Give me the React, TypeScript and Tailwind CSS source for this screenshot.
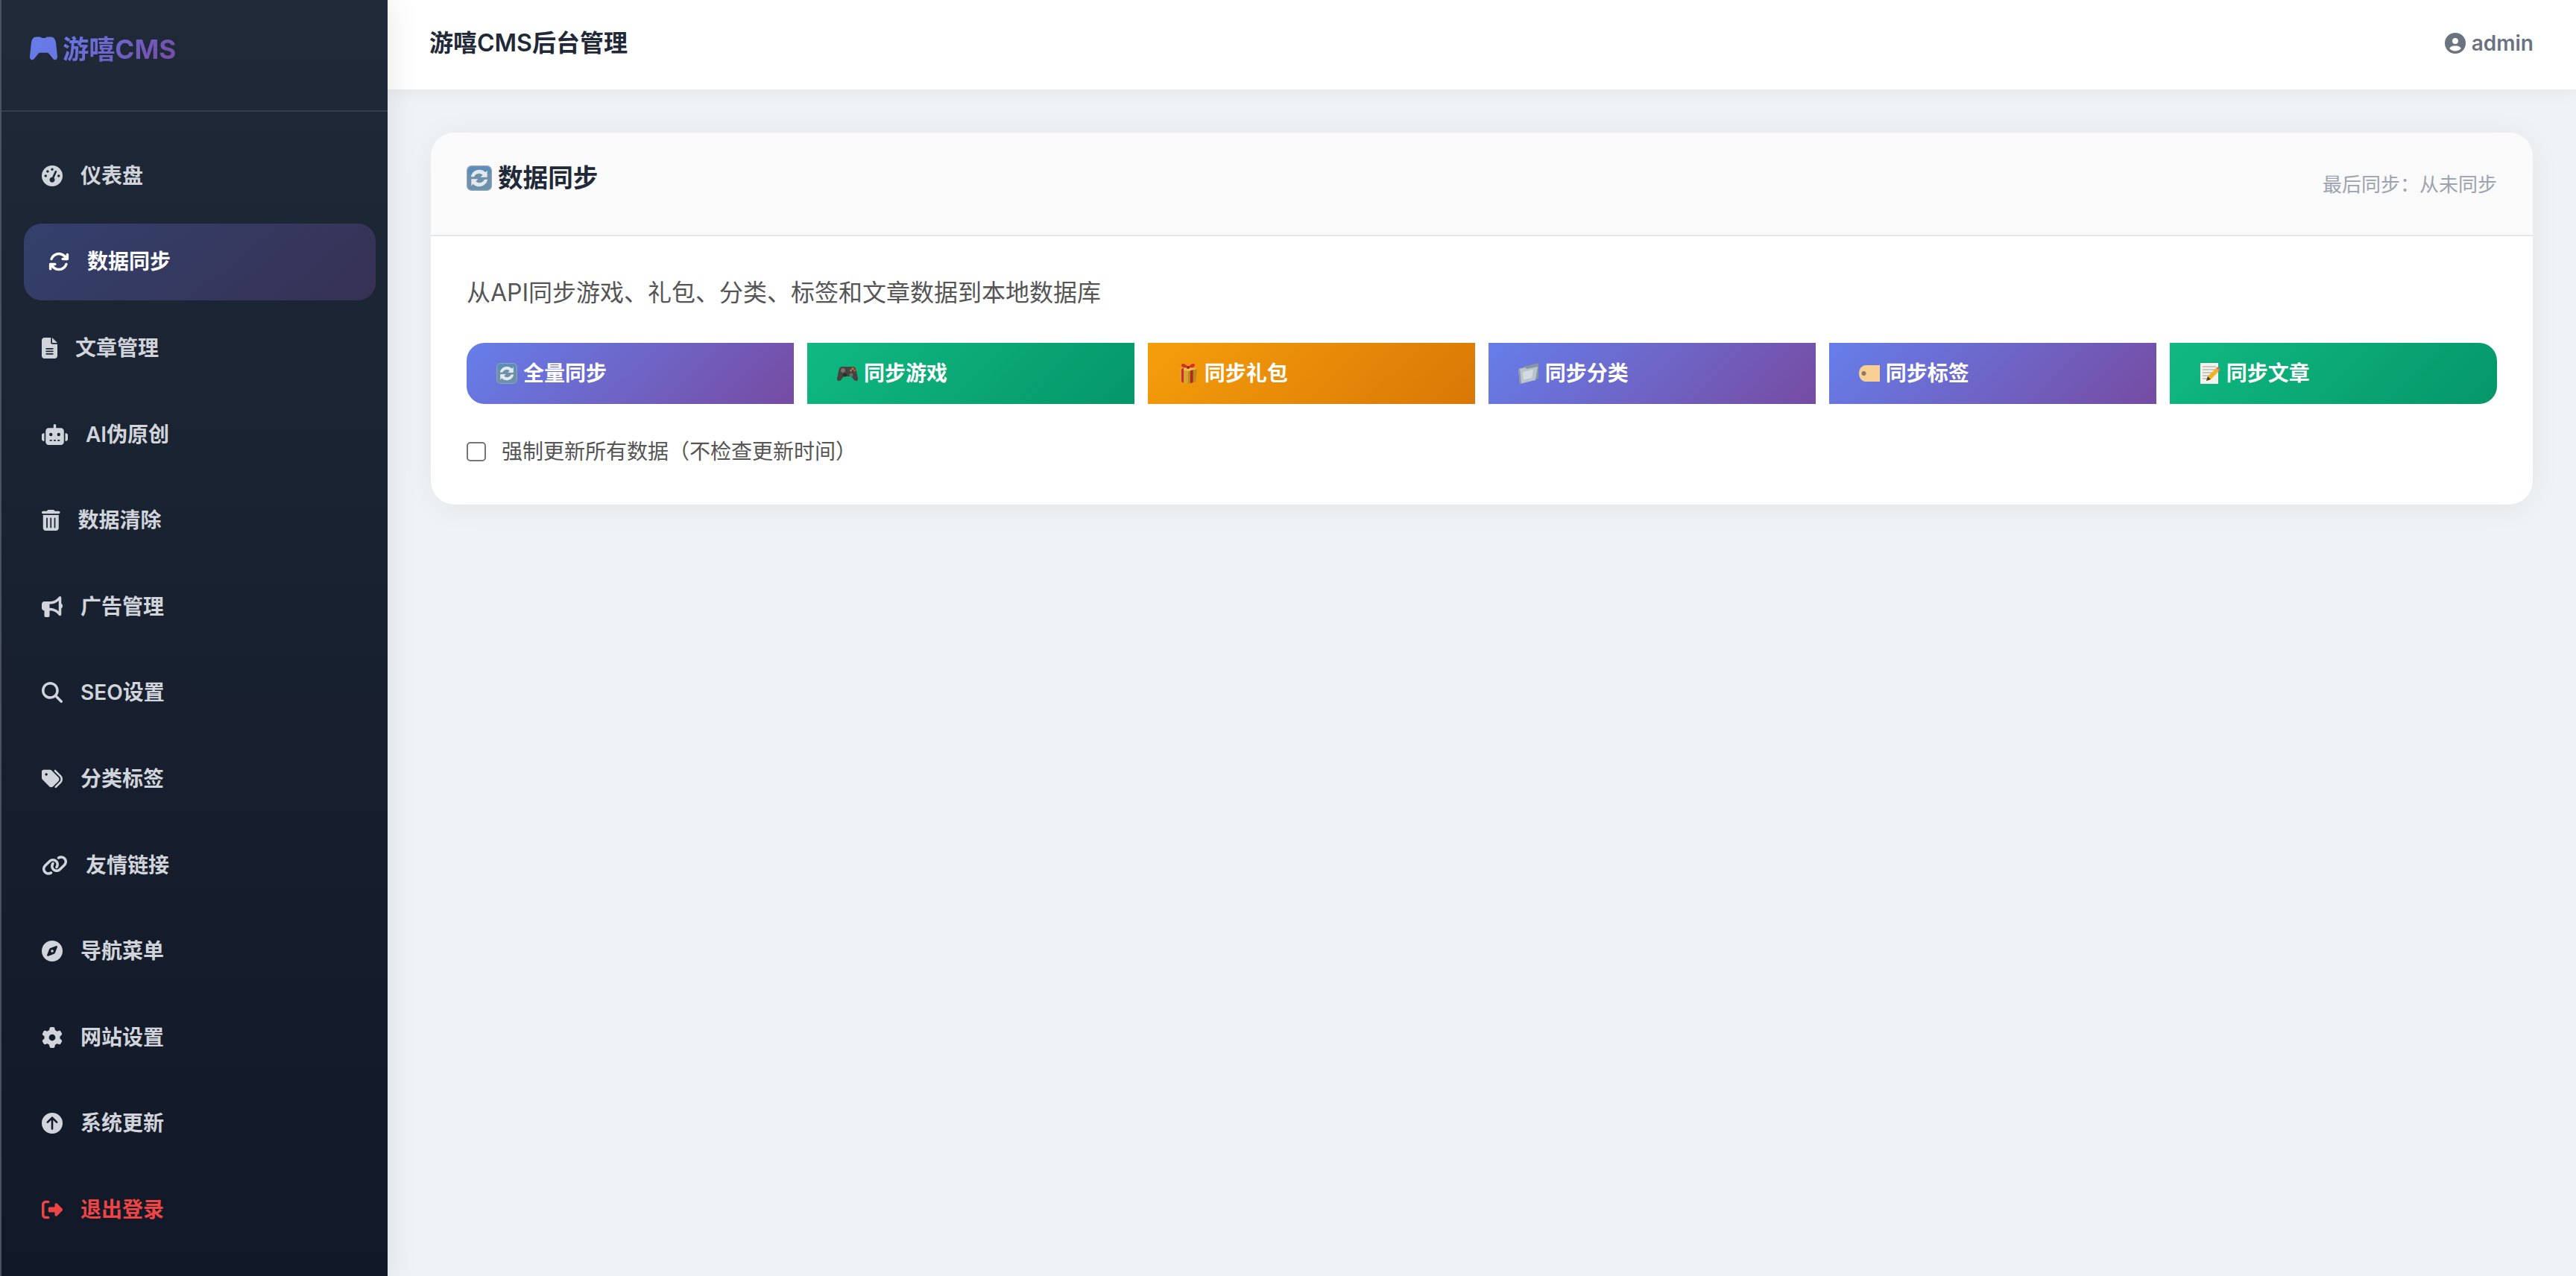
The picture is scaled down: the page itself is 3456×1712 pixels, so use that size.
import type { ReactNode } from 'react';
import {
  FaGaugeHigh,
  FaArrowsRotate,
  FaFileLines,
  FaRobot,
  FaTrashCan,
  FaBullhorn,
  FaMagnifyingGlass,
  FaTags,
  FaLink,
  FaCompass,
  FaGear,
  FaCircleArrowUp,
  FaRightFromBracket,
  FaCircleUser,
} from 'react-icons/fa6';

const fontStack = "font-['Inter','Noto_Sans_CJK_SC',sans-serif]";

// Emoji drawn by hand, no emoji font in the sandbox
function SyncEmoji({ size = 28 }: { size?: number }) {
  return (
    <svg width={size} height={size} viewBox="0 0 28 28" className="shrink-0">
      <rect x="0.5" y="0.5" width="27" height="27" rx="5" fill="#6f90ab" stroke="#8ba6bb" strokeWidth="1" />
      <path d="M1.500 6a4.500 4.500 0 0 1 4.500-4.500h16a4.500 4.500 0 0 1 4.500 4.500v3h-25z" fill="#5a8db8" />
      <path d="M4.800 12.500a9.500 9.500 0 0 1 16-5l2-2v7.500h-7.500l2.500-2.500a5.900 5.900 0 0 0-9.500 2z" fill="#e2eaf0" />
      <path d="M23.200 15.500a9.500 9.500 0 0 1-16 5l-2 2v-7.500h7.500l-2.500 2.500a5.900 5.900 0 0 0 9.500-2z" fill="#e2eaf0" />
    </svg>
  );
}

function GameEmoji() {
  return (
    <svg width="28" height="28" viewBox="0 0 28 28" className="shrink-0">
      <path d="M7 5h14c3 0 4 2 5 6l2 10c.4 3-3 4-5 2l-4-5H9l-4 5c-2 2-5.400 1-5-2l2-10c1-4 2-6 5-6z" fill="#46423f" />
      <circle cx="8" cy="10" r="3" fill="#77726e" />
      <circle cx="19" cy="16" r="2.500" fill="#6f6a66" />
      <circle cx="10.500" cy="16" r="2.500" fill="#2d2a29" />
      <circle cx="21" cy="7.500" r="1.500" fill="#e2701f" />
      <circle cx="23.500" cy="10" r="1.500" fill="#d9552a" />
      <circle cx="18.500" cy="10" r="1.500" fill="#8c8680" />
    </svg>
  );
}

function GiftEmoji() {
  return (
    <svg width="28" height="28" viewBox="0 0 28 28" className="shrink-0">
      <path d="M2 8l12 3v17L4 25z" fill="#d8a32c" />
      <path d="M26 8l-12 3v17l10-3z" fill="#b98a1e" />
      <path d="M2 8l12-3 12 3-12 3z" fill="#e7c24e" />
      <path d="M8 6.500v20l-3-1.200V8z" fill="#c9302c" />
      <path d="M17 10.300v17l3.500-1.200V9.300z" fill="#b5231f" />
      <path d="M14 6C10 0 5 0 5 3s5 4 9 3c4 1 9 0 9-3s-5-3-9 3z" fill="#d92c36" />
      <circle cx="14" cy="6" r="2" fill="#a81e26" />
    </svg>
  );
}

function FolderEmoji() {
  return (
    <svg width="28" height="28" viewBox="0 0 28 28" className="shrink-0">
      <path d="M7 5l20-5v21L7 26z" fill="#8595a1" />
      <path d="M0 8l9-2 2 2 15-3-3 18L2 28z" fill="#b9c5cd" />
      <path d="M0 8l2 20 2-.5L2 7.500z" fill="#8b98a3" />
      <path d="M6 12l13-3 1 1-2 10-11 2.500z" fill="#d3dbe0" />
    </svg>
  );
}

function TagEmoji() {
  return (
    <svg width="28" height="28" viewBox="0 0 28 28" className="shrink-0">
      <path d="M9 3h19v22H9C4 25 0 20 0 14S4 3 9 3z" fill="#f9cf94" />
      <circle cx="6.500" cy="14" r="3" fill="#8b7a66" />
    </svg>
  );
}

function MemoEmoji() {
  return (
    <svg width="28" height="28" viewBox="0 0 28 28" className="shrink-0">
      <rect x="1" y="0" width="24" height="28" fill="#f4f2ec" />
      <path d="M4 5h18M4 9h18M4 13h14M4 17h10M4 21h7" stroke="#9a9a9a" strokeWidth="1.200" />
      <path d="M9 24l2-6L22 7l4 4-11 11z" fill="#f0b323" />
      <path d="M22 7l2-2 4 4-2 2z" fill="#e5736d" />
      <path d="M9 24l2-6 4 4z" fill="#5a3b1e" />
    </svg>
  );
}

// Controller silhouette of the logo, filled with the brand gradient
function LogoPad() {
  return (
    <svg width="37" height="34" viewBox="0 0 38 34" className="shrink-0">
      <defs>
        <linearGradient id="logoPad" x1="0" y1="0" x2="1" y2="1">
          <stop offset="0" stopColor="#667eea" />
          <stop offset="1" stopColor="#6a74e0" />
        </linearGradient>
      </defs>
      <path d="M9 1h5c1.500 0 2 1.500 3 1.500h4c1 0 1.500-1.500 3-1.500h5c4 0 6 3 7 8l2 19c.3 4-3 6-5.500 4l-6-7.500c-1-1.200-2-1.500-3-1.500H14.500c-1 0-2 .3-3 1.500L5.500 32c-2.500 2-5.800 0-5.500-4l2-19c1-5 3-8 7-8z" fill="url(#logoPad)" />
    </svg>
  );
}

// Font Awesome glyphs are not square: width follows the glyph's real ratio
const navItems: { label: string; icon: ReactNode; active?: boolean; danger?: boolean }[] = [
  { label: '仪表盘', icon: <FaGaugeHigh /> },
  { label: '数据同步', icon: <FaArrowsRotate />, active: true },
  { label: '文章管理', icon: <FaFileLines className="h-[28px] w-[21px]" /> },
  { label: 'AI伪原创', icon: <FaRobot className="h-[28px] w-[35px]" /> },
  { label: '数据清除', icon: <FaTrashCan className="h-[28px] w-[24.5px]" /> },
  { label: '广告管理', icon: <FaBullhorn /> },
  { label: 'SEO设置', icon: <FaMagnifyingGlass /> },
  { label: '分类标签', icon: <FaTags /> },
  { label: '友情链接', icon: <FaLink className="h-[28px] w-[35px]" /> },
  { label: '导航菜单', icon: <FaCompass /> },
  { label: '网站设置', icon: <FaGear /> },
  { label: '系统更新', icon: <FaCircleArrowUp /> },
  { label: '退出登录', icon: <FaRightFromBracket />, danger: true },
];

const purple = 'bg-[linear-gradient(135deg,#667eea,#764ba2)]';
const green = 'bg-[linear-gradient(135deg,#10b981,#059669)]';
const orange = 'bg-[linear-gradient(135deg,#f59e0b,#d97706)]';

const syncButtons: { label: string; emoji: ReactNode; bg: string; corner?: string }[] = [
  { label: '全量同步', emoji: <SyncEmoji />, bg: purple, corner: 'rounded-l-[24px]' },
  { label: '同步游戏', emoji: <GameEmoji />, bg: green },
  { label: '同步礼包', emoji: <GiftEmoji />, bg: orange },
  { label: '同步分类', emoji: <FolderEmoji />, bg: purple },
  { label: '同步标签', emoji: <TagEmoji />, bg: purple },
  { label: '同步文章', emoji: <MemoEmoji />, bg: green, corner: 'rounded-r-[24px]' },
];

function Sidebar() {
  return (
    <aside className="relative z-20 flex w-[520px] shrink-0 flex-col border-l-2 border-l-[#4a525e] bg-[linear-gradient(180deg,#1f2937,#111827)] shadow-[0_0_40px_rgba(0,0,0,0.1)]">
      <div className="flex h-[150px] items-start gap-[7px] border-b-2 border-white/10 pl-[38px] pt-[48px]">
        <LogoPad />
        <span className="bg-[linear-gradient(135deg,#6878e6,#764ba2)] bg-clip-text text-[35.2px] leading-[36px] font-bold text-transparent">
          游嘻CMS
        </span>
      </div>
      <nav className="flex flex-col gap-3 pl-[30px] pr-[16px] pt-[34px]">
        {navItems.map((item) => (
          <a
            key={item.label}
            className={`flex h-[103.6px] items-center gap-[24px] rounded-[24px] text-[28px] font-semibold ${
              item.active
                ? 'bg-[linear-gradient(135deg,rgba(102,126,234,0.3),rgba(118,75,162,0.3))] pl-[33px] text-white'
                : item.danger
                  ? 'pl-[24px] text-[#ef4444]'
                  : 'pl-[24px] text-[#d1d5db]'
            }`}
          >
            {item.icon}
            <span>{item.label}</span>
          </a>
        ))}
      </nav>
    </aside>
  );
}

function Topbar() {
  return (
    <header className="relative z-10 flex h-[120px] shrink-0 items-center justify-between bg-white pb-[5px] pl-[56px] pr-[57px] shadow-[0_4px_20px_rgba(0,0,0,0.05)]">
      <h1 className="text-[32px] font-semibold text-[#1f2937]">游嘻CMS后台管理</h1>
      <div className="flex items-center gap-[8px] text-[28px] font-semibold text-[#6b7280]">
        <FaCircleUser />
        <span>admin</span>
      </div>
    </header>
  );
}

function SyncCard() {
  return (
    <section className="overflow-hidden rounded-[32px] bg-white shadow-[0_4px_40px_rgba(0,0,0,0.06)]">
      <div className="flex h-[139px] items-center justify-between border-b-2 border-[#e5e7eb] bg-[#fafafa] px-12">
        <h2 className="mb-[15px] flex items-center gap-[8px] text-[33.6px] font-semibold text-[#1f2937]">
          <SyncEmoji size={34} />
          数据同步
        </h2>
        <span className="pt-[1px] text-[26px] text-[#9ca3af]">最后同步：从未同步</span>
      </div>
      <div className="px-12 pb-[47px] pt-[48px]">
        <p className="mb-[39px] text-[32px] leading-[56px] text-[#555555]">
          从API同步游戏、礼包、分类、标签和文章数据到本地数据库
        </p>
        <div className="grid grid-cols-6 gap-[17.6px]">
          {syncButtons.map((btn) => (
            <button
              key={btn.label}
              className={`flex h-[82px] items-center gap-[8px] pl-[40px] text-[28px] font-semibold text-white ${btn.bg} ${btn.corner ?? ''}`}
            >
              {btn.emoji}
              {btn.label}
            </button>
          ))}
        </div>
        <label className="mt-[40px] flex h-[48px] items-center gap-[21px] text-[28px] text-[#555555]">
          <input
            type="checkbox"
            className="h-[26px] w-[26px] appearance-none rounded-[5px] border-2 border-[#767676] bg-white"
          />
          强制更新所有数据（不检查更新时间）
        </label>
      </div>
    </section>
  );
}

export default function App() {
  return (
    <div className={`flex h-[1712px] w-[3456px] overflow-hidden bg-[#eff3f6] ${fontStack}`}>
      <Sidebar />
      <main className="flex min-w-0 flex-1 flex-col">
        <Topbar />
        <div className="px-[58px] pt-[58px]">
          <SyncCard />
        </div>
      </main>
    </div>
  );
}
